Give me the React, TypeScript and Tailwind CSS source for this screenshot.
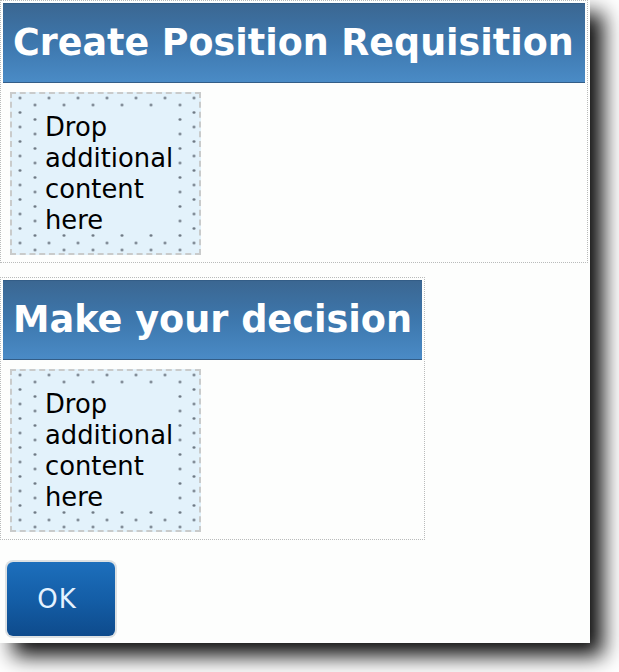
import React from "react";

const font = { fontFamily: '"DejaVu Sans", Verdana, sans-serif' };

function DropZone() {
  return (
    <div className="ml-[7px] mt-[9px] w-[191px] h-[163px] border-2 border-dashed border-[#c9cbcb] bg-[#e3f2fb] [background-image:radial-gradient(circle,#6f7a85_1px,transparent_1.6px),radial-gradient(circle,#6f7a85_1px,transparent_1.6px)] [background-size:29px_14.5px] [background-position:-6.5px_-3.25px,8.5px_3.75px] pt-[16px] pl-[30px] pr-[20px] pb-[21px]">
      <div className="h-full w-[130px] bg-[#e3f2fb] pl-[3px] pt-[2px] text-[25.8px] leading-[31px] text-black" style={font}>
        Drop
        <br />
        additional
        <br />
        content
        <br />
        here
      </div>
    </div>
  );
}

function Section({ title, width, size }: { title: string; width: string; size: string }) {
  return (
    <div className={`${width} border border-dotted border-[#b9bbbb] p-[2px] pb-[7px]`}>
      <div
        className={`h-[80px] flex items-center pl-[10px] bg-gradient-to-b from-[#3b6792] via-[#3d77ad] to-[#4a8bc6] border-t border-b border-[#335d87] text-white font-bold ${size} whitespace-nowrap`}
        style={font}
      >
        {title}
      </div>
      <DropZone />
    </div>
  );
}

export default function App() {
  return (
    <div className="w-[619px] h-[672px] bg-white overflow-hidden">
      <div className="w-[590px] h-[643px] bg-[#fdfefd] shadow-[13px_13px_20px_rgba(0,0,0,0.95)] flex flex-col items-start">
        <Section title="Create Position Requisition" width="w-[588px]" size="text-[36.45px]" />
        <div className="mt-[14px]">
          <Section title="Make your decision" width="w-[425px]" size="text-[36.65px]" />
        </div>
        <button
          className="mt-[22px] ml-[7px] w-[108px] h-[74px] rounded-[6px] bg-gradient-to-b from-[#1d6fbc] via-[#145ea7] to-[#0e4b8c] shadow-[0_0_0_2px_#dde1e3] text-[#e4f2ff] text-[26px] tracking-[1px] pr-[8px] flex items-center justify-center"
          style={font}
        >
          OK
        </button>
      </div>
    </div>
  );
}
